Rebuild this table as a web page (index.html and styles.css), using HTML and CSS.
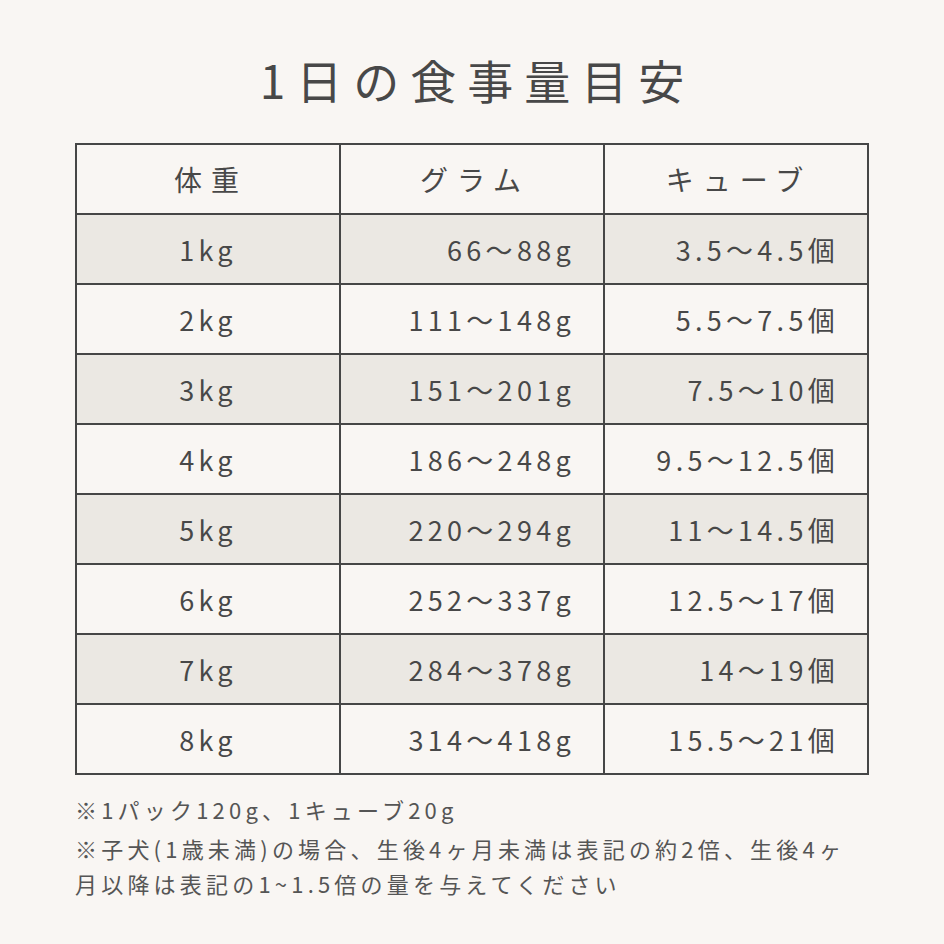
FILE: index.html
```html
<!DOCTYPE html>
<html lang="ja">
<head>
<meta charset="utf-8">
<link rel="stylesheet" href="styles.css">
</head>
<body>
<div class="page">
  <h1 class="title">1日の食事量目安</h1>
  <table class="table">
    <thead>
      <tr><th>体重</th><th>グラム</th><th>キューブ</th></tr>
    </thead>
    <tbody>
      <tr class="shade"><td class="c">1kg</td><td class="r">66～88g</td><td class="r">3.5～4.5個</td></tr>
      <tr><td class="c">2kg</td><td class="r">111～148g</td><td class="r">5.5～7.5個</td></tr>
      <tr class="shade"><td class="c">3kg</td><td class="r">151～201g</td><td class="r">7.5～10個</td></tr>
      <tr><td class="c">4kg</td><td class="r">186～248g</td><td class="r">9.5～12.5個</td></tr>
      <tr class="shade"><td class="c">5kg</td><td class="r">220～294g</td><td class="r">11～14.5個</td></tr>
      <tr><td class="c">6kg</td><td class="r">252～337g</td><td class="r">12.5～17個</td></tr>
      <tr class="shade"><td class="c">7kg</td><td class="r">284～378g</td><td class="r">14～19個</td></tr>
      <tr><td class="c">8kg</td><td class="r">314～418g</td><td class="r">15.5～21個</td></tr>
    </tbody>
  </table>
  <div class="notes">
    <p class="note">※1パック120g、1キューブ20g</p>
    <p class="note second">※子犬(1歳未満)の場合、生後4ヶ月未満は表記の約2倍、生後4ヶ<br>月以降は表記の1~1.5倍の量を与えてください</p>
  </div>
</div>
</body>
</html>
```
FILE: styles.css
```css
html, body {
  margin: 0;
  padding: 0;
  background: #f9f6f3;
}
body {
  font-family: "Noto Sans CJK JP", "Noto Sans", sans-serif;
  color: #484848;
}
.page {
  width: 944px;
  height: 944px;
  padding: 46px 75px 0;
  box-sizing: border-box;
}
.title {
  margin: 0 0 31px;
  text-align: center;
  font-size: 46px;
  font-weight: 400;
  letter-spacing: 11px;
  line-height: 66px;
  padding-left: 11px;
}
.table {
  width: 794px;
  border-collapse: collapse;
  table-layout: fixed;
}
.table th, .table td {
  border: 2px solid #464646;
  height: 68px;
  padding: 0;
  font-size: 27px;
  font-weight: 400;
  letter-spacing: 4.3px;
}
.table th {
  text-align: center;
  font-size: 28px;
  letter-spacing: 9px;
  padding-left: 6px;
}
.shade td {
  background: #ebe8e3;
}
.c {
  text-align: center;
}
.r {
  text-align: right;
  padding-right: 28px !important;
}
.notes {
  margin-top: 16px;
}
.note {
  margin: 0;
  font-size: 22px;
  line-height: 36px;
  letter-spacing: 4.2px;
  color: #555;
}
.second {
  margin-top: 4px;
  line-height: 35px;
}
```
